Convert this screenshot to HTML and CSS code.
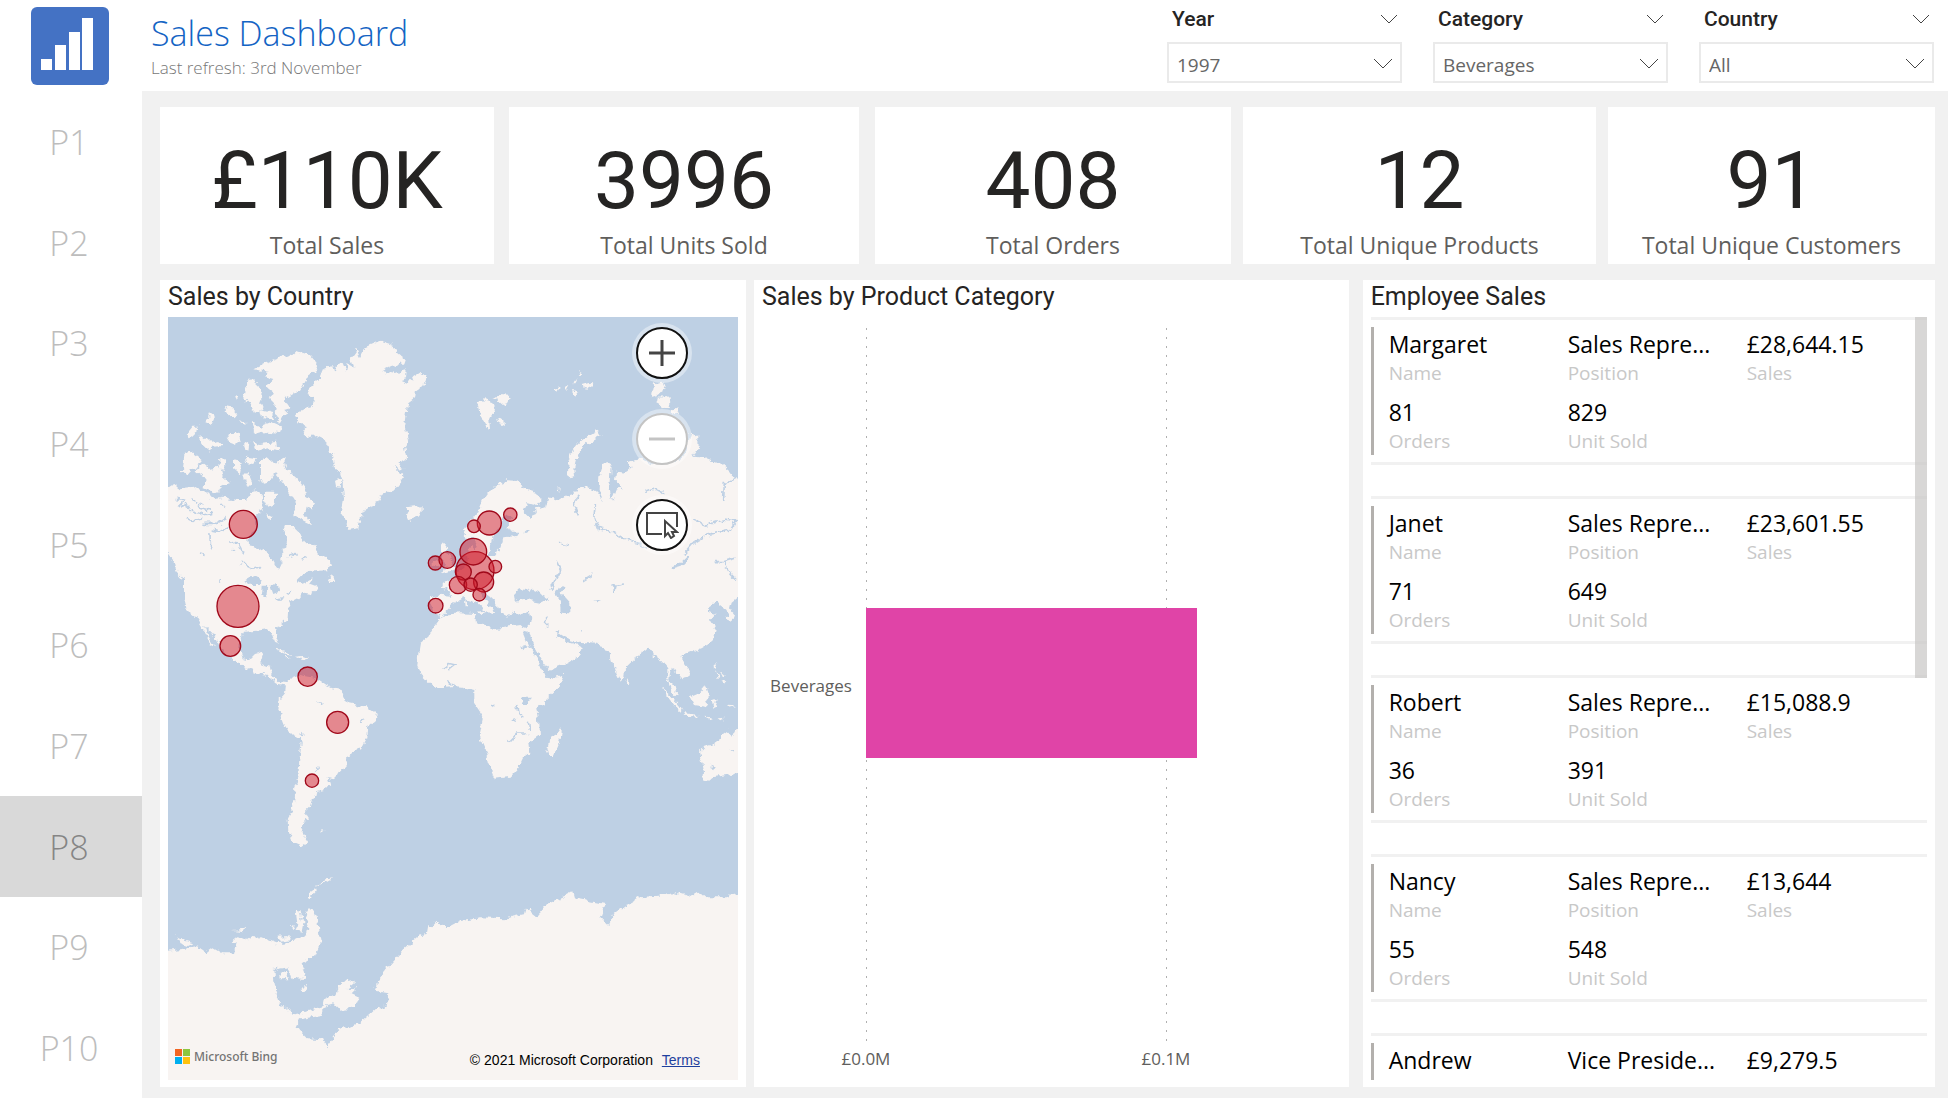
FILE: index.html
```
<!DOCTYPE html>
<html lang="en">
<head>
  <meta charset="UTF-8">
  <meta name="viewport" content="width=device-width, initial-scale=1.0">
  <title>Sales Dashboard</title>
  <link rel="stylesheet" href="styles.css">
</head>
<body>
  <div class="side">
    <div class="logo">
      <svg viewBox="0 0 78 78" width="78" height="78">
        <rect width="78" height="78" rx="6" fill="#4472c4"/>
        <path fill="#fff" d="M10 52h11v11H10zM24 38h11v25H24zM38 25h11v38H38zM51 11h11v52H51z"/>
      </svg>
    </div>
    <nav class="pages">
      <a href="#p1">P1</a>
      <a href="#p2">P2</a>
      <a href="#p3">P3</a>
      <a href="#p4">P4</a>
      <a href="#p5">P5</a>
      <a href="#p6">P6</a>
      <a href="#p7">P7</a>
      <a href="#p8" class="active">P8</a>
      <a href="#p9">P9</a>
      <a href="#p10">P10</a>
    </nav>
  </div>

  <div class="main">
    <header class="header">
      <div class="heading">
        <h1>Sales Dashboard</h1>
        <p>Last refresh: 3rd November</p>
      </div>
      <div class="filters">
        <div class="filter">
          <div class="filter-title">
            <label for="year">Year</label>
            <svg width="18" height="10" viewBox="0 0 18 10"><path d="M1 1l8 8 8-8"/></svg>
          </div>
          <div class="select-box">
            <select id="year"><option>1997</option></select>
            <svg width="20" height="11" viewBox="0 0 20 11"><path d="M1 1l9 9 9-9"/></svg>
          </div>
        </div>
        <div class="filter">
          <div class="filter-title">
            <label for="category">Category</label>
            <svg width="18" height="10" viewBox="0 0 18 10"><path d="M1 1l8 8 8-8"/></svg>
          </div>
          <div class="select-box">
            <select id="category"><option>Beverages</option></select>
            <svg width="20" height="11" viewBox="0 0 20 11"><path d="M1 1l9 9 9-9"/></svg>
          </div>
        </div>
        <div class="filter">
          <div class="filter-title">
            <label for="country">Country</label>
            <svg width="18" height="10" viewBox="0 0 18 10"><path d="M1 1l8 8 8-8"/></svg>
          </div>
          <div class="select-box">
            <select id="country"><option>All</option></select>
            <svg width="20" height="11" viewBox="0 0 20 11"><path d="M1 1l9 9 9-9"/></svg>
          </div>
        </div>
      </div>
    </header>

    <div class="board">
      <div class="kpis">
        <div class="kpi sales"><strong>£110K</strong><span>Total Sales</span></div>
        <div class="kpi units"><strong>3996</strong><span>Total Units Sold</span></div>
        <div class="kpi orders"><strong>408</strong><span>Total Orders</span></div>
        <div class="kpi products"><strong>12</strong><span>Total Unique Products</span></div>
        <div class="kpi customers"><strong>91</strong><span>Total Unique Customers</span></div>
      </div>

      <div class="panels">
        <section class="panel map-panel">
          <h2>Sales by Country</h2>
          <div class="map">
            <svg class="world" viewBox="0 0 1710 2289" preserveAspectRatio="xMidYMid slice">
              <defs>
                <!-- rough coastlines -->
                <filter id="coast" x="0" y="0" width="100%" height="100%">
                  <feTurbulence type="fractalNoise" baseFrequency="0.05" numOctaves="3" seed="4"/>
                  <feDisplacementMap in="SourceGraphic" scale="22" xChannelSelector="R" yChannelSelector="G"/>
                </filter>
              </defs>
              <g filter="url(#coast)">
              <rect x="-60" y="-60" width="1830" height="2410" class="sea"/>
              <!-- Americas and Greenland -->
              <g transform="translate(-24 -141)">
                <path class="land" d="M-20 650L24 650 40 640 60 655 100 650 125 665 160 685 190 680 230 690 262 690 272 665 290 660 308 675 312 700 300 725 285 740 290 775 268 795 262 815 290 832 330 855 346 885 358 897 368 875 362 850 378 830 382 810 368 785 375 768 400 768 422 790 432 820 455 818 468 835 480 855 502 865 512 880 505 900 480 902 450 905 425 915 408 932 428 938 455 925 448 945 475 955 455 970 430 965 415 985 395 995 385 1015 383 1045 360 1065 345 1075 350 1100 357 1118 345 1112 335 1085 320 1078 290 1082 255 1085 240 1100 238 1135 248 1165 270 1170 285 1155 310 1148 300 1180 330 1190 333 1212 352 1235 385 1240 380 1248 345 1238 320 1215 295 1210 265 1198 240 1182 212 1165 180 1130 160 1092 132 1065 140 1085 168 1132 155 1125 128 1075 110 1045 80 1022 72 980 72 930 50 905 45 880 24 850 -20 840z"/>
                <path class="land" d="M385 1235L400 1220 415 1215 470 1225 500 1245 520 1255 545 1260 555 1290 570 1300 620 1310 650 1328 648 1350 625 1370 622 1405 605 1438 585 1442 562 1460 558 1485 540 1505 525 1525 500 1522 508 1545 495 1560 472 1565 470 1580 455 1585 450 1610 435 1625 447 1645 430 1665 425 1685 445 1717 430 1728 400 1715 385 1680 383 1650 395 1630 405 1580 402 1555 415 1520 418 1470 425 1420 420 1405 390 1390 370 1360 355 1320 358 1290 375 1270 378 1245z"/>
                <path class="land" d="M408 440L425 420 455 410 460 380 443 372 450 350 480 322 490 298 520 282 526 310 534 285 545 275 558 305 562 280 580 290 572 265 590 240 600 262 615 232 630 225 660 212 700 225 715 250 735 265 730 280 700 288 668 303 705 312 740 298 738 325 722 330 745 340 760 318 780 305 800 320 790 345 768 360 765 385 745 400 740 430 735 470 748 510 735 530 742 560 715 575 730 600 700 590 735 622 710 655 665 675 650 700 620 712 605 735 595 775 565 780 555 745 545 730 552 690 548 640 540 605 525 590 518 550 500 525 490 505 470 495 440 505 425 490 437 472 420 455z"/>
                <path class="land" d="M280 298L320 278 350 268 370 250 390 262 410 243 450 255 475 285 466 305 440 325 420 360 400 372 378 385 368 380 388 410 370 435 358 458 346 440 350 410 325 385 345 368 322 350 340 330 312 322 325 306z"/>
                <path class="land" d="M258 345L270 325 292 345 310 370 300 395 308 415 285 432 270 400 248 380zM66 605L70 552 92 545 122 567 112 590 95 598 80 615zM112 595L130 578 152 597 180 588 188 618 213 640 190 645 178 668 150 660 128 650 135 625 105 605zM300 630L300 570 320 562 340 580 372 565 382 600 410 625 432 652 435 680 465 700 455 715 440 710 435 732 452 765 420 750 400 735 410 700 385 660 365 635 345 612 330 632 310 638z"/>
                <path class="land" d="M278 510L300 522 352 515 355 540 320 535 290 543zM80 495L100 470 120 470 112 485 88 503zM140 455L150 430 165 440 155 463zM112 500L130 498 150 515 175 510 188 528 155 530 150 542 130 525zM190 408L215 412 232 430 225 448 205 435zM240 450L262 460 255 468zM198 490L235 488 242 510 220 525zM250 512L268 518 265 542 250 532zM275 455L300 470 335 455 368 470 360 490 320 485 285 495zM225 375L235 385 230 392zM222 565L245 580 240 610 222 595zM258 560L288 565 280 582 262 580zM250 612L265 610 278 640 268 650 255 640zM180 568L195 565 196 595 184 600zM315 665L345 665 345 700 325 710 315 690zM312 730L335 740 330 752zM525 632L545 630 542 650 528 648zM300 420L340 430 335 445 305 440z"/>
                <path class="land" d="M732 740L745 722 738 712 770 708 786 722 778 738 750 748zM840 828L850 815 862 830 855 845 870 862 880 885 892 896 850 910 858 884 848 862zM815 872L838 860 842 888 815 895zM502 925L520 918 524 932 508 934zM342 1135L375 1142 400 1155 370 1150zM408 1160L428 1158 448 1165 430 1170zM375 1160L390 1162 380 1165zM480 1682L494 1680 484 1687z"/>
                <path class="inlet" d="M50 685L75 690 60 705 90 715M75 700L100 725 130 735 160 730M95 690L125 700 118 712 150 720M80 745L105 752 130 745M155 780L180 785 205 770M150 790L152 840M180 700L195 715M120 852l14 4M175 935l12-8M208 820L235 815M245 880L275 895 300 890M215 835l10 10M130 760L175 760 200 745M225 810L240 830 250 850M385 860L410 850M425 870L440 865"/>
                <path class="lake" d="M250 932L278 915 305 930 300 945 270 945zM308 950L322 950 318 988 306 975zM328 940L352 945 358 965 340 972zM345 985L375 980 360 990zM380 965L400 962 388 972zM470 1296l26 2-10 6zM600 1352l14-4-8 10zM420 1385l14 8-4 6zM464 1497l12-2-6 8z"/>
              </g>
              <!-- Europe, Asia and Africa -->
              <g transform="translate(816 -51)">
                <path class="land" d="M70 700L80 680 110 640 125 605 150 570 175 555 200 538 235 540 245 562 288 575 305 600 292 618 262 610 250 632 268 650 288 642 285 628 318 622 325 592 350 598 380 588 400 582 412 568 440 558 468 575 492 605 476 570 478 530 490 492 506 486 512 502 508 560 516 600 525 575 548 562 525 545 528 512 560 515 575 502 563 484 600 475 630 490 720 485 735 455 750 395 775 412 776 445 760 470 800 475 840 490 870 515 885 535 950 545 950 880 894 890 875 905 870 925 885 945 880 960 865 958 860 930 840 915 830 905 808 920 806 936 822 942 812 955 828 982 822 1008 810 1030 785 1045 745 1060 725 1068 728 1085 750 1110 745 1130 725 1135 712 1115 692 1100 688 1140 705 1165 712 1190 695 1172 682 1135 682 1105 660 1078 642 1070 638 1050 625 1040 610 1055 585 1070 578 1085 558 1105 556 1135 543 1146 530 1120 515 1080 510 1055 490 1050 475 1028 410 1025 390 1020 370 1008 350 995 345 1000 372 1025 400 1030 425 1045 415 1070 385 1090 325 1112 310 1108 318 1133 330 1135 370 1128 350 1170 292 1225 298 1265 300 1305 265 1328 268 1358 250 1372 235 1405 212 1430 162 1436 145 1392 135 1350 118 1310 130 1250 103 1210 103 1170 65 1160 40 1158 -15 1165 -30 1150 -55 1125 -68 1100 -65 1060 -60 1030 -35 1010 -20 980 5 945 -28 935 -30 895 0 887 32 890 22 868 -2 860 22 845 45 832 65 805 85 785 80 760 95 738 105 750 112 730 98 715 80 720z"/>
                <path class="lake" d="M8 944L30 922 45 905 70 892 85 900 112 908 130 928 150 948 163 928 140 905 122 882 135 880 158 898 176 918 188 942 205 950 218 932 240 944 270 935 275 960 262 985 235 975 200 980 172 990 140 980 108 965 105 942 60 940zM222 885L240 868 262 870 268 860 280 872 310 885 328 895 300 908 255 900 225 905zM345 880L358 858 380 862 365 880 388 905 388 940 362 938 360 905zM250 995L262 998 280 1035 305 1080 325 1108 318 1125 300 1095 270 1045zM145 768L155 735 162 705 182 680 188 650 205 640 215 655 202 680 210 695 240 695 232 708 190 712 182 745 165 768z"/>
                <path class="land" d="M72 900l8 2 2 18-8-4zM112 935l22-3-8 14z"/>
                <path class="inlet" d="M466 612L462 650 475 685 520 695 560 722 600 730 625 745M415 590L400 610 412 640M760 660L800 675 850 660 885 665 870 690 800 705 760 730 730 765M850 548L848 600M885 535L852 552M820 785L850 785 870 820 890 840M850 785L885 775M350 785L362 810 340 850 330 875M255 700L270 690M610 575L640 565 670 580M320 945L320 980M360 730L390 735M430 840L455 825M520 860L555 855M245 1045L262 1040M5 1105L25 1090 45 1095 25 1110M20 1145L45 1155M230 1215L235 1240 250 1252M265 1265L268 1290M208 1325L230 1302 262 1302"/>
                <path class="lake" d="M245 1190L275 1190 265 1212 248 1212zM155 1210l8 2v10l-6-4zM460 905l30-4-18 9zM518 855l10 2-4 20-8-6zM425 990l6-2v8zM220 1258l12-4-6 10zM695 800L720 790 745 765 750 772 725 800 700 808z"/>
                <path class="zemlya" d="M396 530Q385 470 430 430Q450 412 478 398"/>
                <path class="land" d="M110 300L130 305 140 295 155 300 165 330 148 355 150 390 138 375 120 345zM162 295L178 285 212 288 205 305 185 312 172 300zM175 350L190 360 192 375 178 368zM400 240L415 232 410 250 398 250zM425 255L460 245 440 272 428 270zM398 270L418 275 408 288zM340 268L360 262 352 275zM370 262L388 258 380 272zM415 215L424 220 418 226zM640 250L668 245 678 270 655 285 632 292zM650 290L685 288 690 320 665 325zM695 330L712 322 720 345 702 345zM355 565l8 4-6 6z"/>
                <path class="land" d="M360 1285L365 1290 362 1320 342 1368 328 1368 322 1345 330 1310 350 1300zM562 1135l10 14-8 8-4-10zM665 1163L690 1185 725 1228 722 1235 700 1215 680 1190zM732 1240L775 1245 772 1250 735 1247zM692 1160l22 20-2 8-16-14zM750 1192L778 1180 800 1156 806 1190 798 1220 762 1215zM818 1200l18-6-10 12 8 14-10 4zM848 1140l14 6-8 10zM826 1080l8 20-6 8zM825 1110l16 20-8 4zM842 1112l12 10-4 6zM800 1250l20 4-16 4zM836 1255l20-2-12 8zM862 1217l24 2-22 4z"/>
                <path class="land" d="M780 1355L792 1342 830 1328 845 1305 862 1292 880 1310 892 1285 950 1270 950 1410 894 1415 860 1425 818 1432 805 1442 790 1438 792 1410z"/>
                <path class="lake" d="M872 1347l10 2-6 6zM816 1395l6 2-2 14-6-4z"/>
              </g>
              <!-- Antarctica -->
              <g transform="translate(-24 1029)">
                <path class="land" d="M-20 876L24 872 110 862 145 875 160 865 185 880 222 880 230 850 215 845 232 832 260 838 275 828 300 830 350 850 400 845 440 825 445 800 433 770 450 740 470 770 475 810 482 850 465 885 425 910 436 935 425 960 395 955 385 922 340 930 345 980 360 1030 385 1050 405 1060 450 1052 490 1040 495 1018 530 1003 535 980 565 955 585 970 562 988 590 985 575 1000 598 1010 585 1045 540 1052 520 1030 500 1035 480 1068 420 1078 410 1100 440 1135 490 1138 499 1162 545 1102 600 1090 655 1040 680 1045 685 1000 645 992 650 965 700 905 730 870 775 830 800 825 805 795 815 802 830 785 845 798 870 798 905 780 960 772 1035 775 1095 762 1100 745 1130 770 1160 735 1215 710 1240 697 1245 715 1335 732 1320 770 1345 795 1360 765 1400 735 1440 712 1515 705 1545 697 1590 710 1615 695 1635 712 1700 712 1720 705 1790 690 1790 1400 -20 1400z"/>
                <path class="land" d="M358 942L378 935 385 958 360 958zM420 995L440 972 448 978 428 998zM445 720L450 695 468 682 470 695 455 712zM470 678L500 655 520 652 485 672zM410 752L422 755 430 790 425 815 405 810 415 790zM388 795L405 798 400 808zM352 830L385 828 390 838 362 842zM52 832L75 842 100 850 85 858 62 850zM218 810L252 806 250 814z"/>
              </g>
              </g>
              <!-- sales by country -->
              <g class="bubbles">
                <circle cx="226" cy="622" r="42"/>
                <circle cx="210" cy="868" r="63"/>
                <circle cx="187" cy="987" r="31"/>
                <circle cx="419" cy="1079" r="29"/>
                <circle cx="509" cy="1216" r="33"/>
                <circle cx="432" cy="1391" r="20"/>
                <circle cx="802" cy="738" r="21"/>
                <circle cx="838" cy="729" r="25"/>
                <circle cx="803" cy="866" r="22"/>
                <circle cx="921" cy="761" r="57"/>
                <circle cx="916" cy="704" r="40"/>
                <circle cx="964" cy="618" r="36"/>
                <circle cx="918" cy="628" r="19"/>
                <circle cx="1027" cy="593" r="20"/>
                <circle cx="982" cy="749" r="19"/>
                <circle cx="886" cy="765" r="24"/>
                <circle cx="870" cy="804" r="26"/>
                <circle cx="947" cy="795" r="30"/>
                <circle cx="908" cy="803" r="20"/>
                <circle cx="934" cy="833" r="19"/>
              </g>
            </svg>
            <div class="map-tools">
              <button aria-label="Zoom in"><svg width="26" height="26" viewBox="0 0 26 26"><path d="M13 0v26M0 13h26" stroke-width="3"/></svg></button>
              <button aria-label="Zoom out" disabled><svg width="26" height="26" viewBox="0 0 26 26"><path d="M0 13h26" stroke-width="3"/></svg></button>
              <button aria-label="Select area"><svg width="34" height="28" viewBox="0 0 34 28"><path d="M17 23H2V2h30v14" stroke-width="2"/><path d="M20 10v15l3-3 3 5 3-2-2-4h5z" stroke-width="2"/></svg></button>
            </div>
            <div class="map-footer">
              <div class="bing">
                <svg width="15" height="15" viewBox="0 0 15 15"><path fill="#f26522" d="M0 0h7v7H0z"/><path fill="#8dc63f" d="M8 0h7v7H8z"/><path fill="#00aeef" d="M0 8h7v7H0z"/><path fill="#ffc20e" d="M8 8h7v7H8z"/></svg>
                <span>Microsoft Bing</span>
              </div>
              <div class="terms">© 2021 Microsoft Corporation <a href="#terms">Terms</a></div>
            </div>
          </div>
        </section>

        <section class="panel chart-panel">
          <h2>Sales by Product Category</h2>
          <div class="chart">
            <div class="category">Beverages</div>
            <div class="plot">
              <div class="gridline" style="left: 0%"></div>
              <div class="gridline" style="left: 63.2%"></div>
              <div class="bar" style="width: 69.7%"></div>
            </div>
            <div class="axis">
              <span style="left: 0%">£0.0M</span>
              <span style="left: 63.2%">£0.1M</span>
            </div>
          </div>
        </section>

        <section class="panel employee-panel">
          <h2>Employee Sales</h2>
          <div class="employees">
            <div class="employee">
              <dl>
                <div><dd>Margaret</dd><dt>Name</dt></div>
                <div><dd>Sales Repre...</dd><dt>Position</dt></div>
                <div><dd>£28,644.15</dd><dt>Sales</dt></div>
                <div><dd>81</dd><dt>Orders</dt></div>
                <div><dd>829</dd><dt>Unit Sold</dt></div>
              </dl>
            </div>
            <div class="employee">
              <dl>
                <div><dd>Janet</dd><dt>Name</dt></div>
                <div><dd>Sales Repre...</dd><dt>Position</dt></div>
                <div><dd>£23,601.55</dd><dt>Sales</dt></div>
                <div><dd>71</dd><dt>Orders</dt></div>
                <div><dd>649</dd><dt>Unit Sold</dt></div>
              </dl>
            </div>
            <div class="employee">
              <dl>
                <div><dd>Robert</dd><dt>Name</dt></div>
                <div><dd>Sales Repre...</dd><dt>Position</dt></div>
                <div><dd>£15,088.9</dd><dt>Sales</dt></div>
                <div><dd>36</dd><dt>Orders</dt></div>
                <div><dd>391</dd><dt>Unit Sold</dt></div>
              </dl>
            </div>
            <div class="employee">
              <dl>
                <div><dd>Nancy</dd><dt>Name</dt></div>
                <div><dd>Sales Repre...</dd><dt>Position</dt></div>
                <div><dd>£13,644</dd><dt>Sales</dt></div>
                <div><dd>55</dd><dt>Orders</dt></div>
                <div><dd>548</dd><dt>Unit Sold</dt></div>
              </dl>
            </div>
            <div class="employee">
              <dl>
                <div><dd>Andrew</dd></div>
                <div><dd>Vice Preside...</dd></div>
                <div><dd>£9,279.5</dd></div>
              </dl>
            </div>
            <div class="scrollbar"></div>
          </div>
        </section>
      </div>
    </div>
  </div>
</body>
</html>
```
FILE: styles.css
```
* {
  box-sizing: border-box;
}
body {
  margin: 0;
  display: flex;
  height: 100vh;
  min-height: 700px;
  background: white;
  font-family: "Open Sans", "Noto Sans", sans-serif;
  color: #252423;
}
.side {
  width: 142px;
  flex: none;
  display: flex;
  flex-direction: column;
}
.logo {
  height: 91px;
  padding: 7px 0 0 31px;
}
.pages {
  flex: 1;
  display: flex;
  flex-direction: column;
}
.pages a {
  flex: 1;
  display: flex;
  align-items: center;
  justify-content: center;
  padding: 1px 4px 0 0;
  font-size: 34px;
  font-weight: 300;
  color: #bdbdbd;
  text-decoration: none;
}
.pages .active {
  background: #d9d9d9;
  color: #858585;
}
.main {
  flex: 1;
  min-width: 0;
  display: flex;
  flex-direction: column;
}
.header {
  height: 91px;
  flex: none;
  display: flex;
  justify-content: space-between;
  padding: 0 14px 0 9px;
}
.heading {
  padding-top: 10px;
}
h1 {
  margin: 0;
  font-size: 34px;
  line-height: 46px;
  font-weight: 300;
  color: #1464c4;
}
.heading p {
  margin: 0;
  font-size: 17px;
  line-height: 24px;
  font-weight: 300;
  color: #777;
}
.filters {
  display: flex;
  gap: 31px;
}
.filter {
  width: 235px;
}
.filter-title {
  display: flex;
  align-items: center;
  justify-content: space-between;
  height: 42px;
  padding: 0 4px 4px 5px;
  font-family: Roboto, sans-serif;
  font-size: 21px;
  font-weight: 500;
}
.filter svg {
  fill: none;
  stroke: #444;
  margin: 0 0 0 auto;
}
.select-box {
  position: relative;
}
.select-box select {
  appearance: none;
  width: 100%;
  height: 41px;
  padding: 4px 34px 0 8px;
  border: 2px solid #eaeaea;
  border-radius: 0;
  background: white;
  font-family: "Open Sans", "Noto Sans", sans-serif;
  font-size: 19px;
  color: #666;
}
.select-box svg {
  position: absolute;
  right: 9px;
  top: 16px;
  pointer-events: none;
}
.board {
  flex: 1;
  min-height: 0;
  display: flex;
  flex-direction: column;
  gap: 16px;
  padding: 16px 13px 11px 18px;
  background: #f1f1f1;
}
.kpis {
  display: flex;
  gap: 12px;
}
.kpi {
  height: 157px;
  padding-top: 26px;
  background: white;
  text-align: center;
}
.kpi strong {
  display: block;
  font-family: Roboto, sans-serif;
  font-size: 80px;
  line-height: 96px;
  font-weight: 400;
}
.kpi span {
  display: block;
  font-size: 23px;
  line-height: 32px;
  color: #605e5c;
}
.sales {
  flex: 334;
}
.units {
  flex: 350;
  margin-left: 3px;
}
.orders {
  flex: 356;
  margin-left: 4px;
}
.products {
  flex: 353;
}
.customers {
  flex: 327;
}
.panels {
  flex: 1;
  min-height: 0;
  display: flex;
}
.panel {
  display: flex;
  flex-direction: column;
  min-width: 0;
  padding: 0 8px 7px;
  background: white;
}
.panel h2 {
  margin: 0;
  height: 37px;
  font-family: Roboto, sans-serif;
  font-size: 25px;
  line-height: 34px;
  font-weight: 400;
}
.map-panel {
  flex: 586;
  margin-right: 8px;
}
.chart-panel {
  flex: 595;
  margin-right: 14px;
}
.employee-panel {
  flex: 572;
}
.map {
  position: relative;
  flex: 1;
  min-height: 0;
  overflow: hidden;
  background: #bed0e4;
}
.world {
  position: absolute;
  width: 100%;
  height: 100%;
}
.sea {
  fill: #bed0e4;
}
.land {
  fill: #f8f4f2;
}
.lake {
  fill: #bed0e4;
}
.inlet {
  fill: none;
  stroke: #bed0e4;
  stroke-width: 5;
}
.zemlya {
  fill: none;
  stroke: #f8f4f2;
  stroke-width: 19;
}
.bubbles {
  fill: rgba(208, 28, 44, 0.5);
  stroke: #a0081a;
  stroke-width: 4;
}
.map-tools {
  position: absolute;
  top: 10px;
  right: 50px;
  display: flex;
  flex-direction: column;
  gap: 34px;
}
.map-tools button {
  display: flex;
  align-items: center;
  justify-content: center;
  width: 52px;
  height: 52px;
  padding: 0;
  border: 2px solid #111;
  border-radius: 50%;
  background: white;
  box-shadow: 0 0 0 4px rgba(255, 255, 255, 0.4);
}
.map-tools svg {
  fill: none;
  stroke: #444;
}
.map-tools button:disabled {
  border-color: #c4c4c4;
}
.map-tools button:disabled svg {
  stroke: #c4c4c4;
}
.map-footer {
  position: absolute;
  left: 7px;
  right: 38px;
  bottom: 10px;
  display: flex;
  justify-content: space-between;
}
.bing {
  display: flex;
  align-items: center;
  gap: 4px;
  height: 22px;
  font-family: "Noto Sans", sans-serif;
  font-size: 12px;
  font-weight: 500;
  color: #737373;
}
.terms {
  padding-top: 5px;
  font-family: "Liberation Sans", Arial, sans-serif;
  font-size: 14px;
  line-height: 20px;
  color: black;
}
.terms a {
  margin-left: 5px;
  color: #1f3f9e;
}
.chart {
  flex: 1;
  display: grid;
  grid-template-columns: 90px 1fr;
  grid-template-rows: 1fr 37px;
  column-gap: 14px;
  padding-top: 11px;
}
.category {
  align-self: center;
  text-align: right;
  font-size: 17px;
  color: #605e5c;
}
.plot {
  position: relative;
  display: flex;
  align-items: center;
  padding-bottom: 6px;
}
.gridline {
  position: absolute;
  top: 0;
  bottom: 0;
  width: 1px;
  background: repeating-linear-gradient(#b0b0b0 0 2px, transparent 2px 9px);
}
.bar {
  position: relative;
  height: 150px;
  background: #e044a7;
}
.axis {
  position: relative;
  grid-column: 2;
}
.axis span {
  position: absolute;
  top: 4px;
  transform: translateX(-50%);
  font-size: 17px;
  line-height: 24px;
  color: #605e5c;
}
.employees {
  position: relative;
  flex: 1;
  min-height: 0;
  overflow: hidden;
}
.employee {
  height: 148px;
  margin-bottom: 31px;
  padding: 7px 0;
  border-top: 3px solid #f1f1f1;
  border-bottom: 3px solid #f1f1f1;
}
.employee dl {
  display: grid;
  grid-template-columns: repeat(3, 179px);
  grid-auto-rows: 68px;
  height: 128px;
  margin: 0;
  padding-left: 15px;
  border-left: 3px solid #b3b0ad;
}
.employee dd {
  margin: 0;
  font-size: 23px;
  line-height: 34px;
  color: black;
  white-space: nowrap;
}
.employee dt {
  font-size: 19px;
  line-height: 25px;
  color: #c8c8c8;
}
.scrollbar {
  position: absolute;
  top: 0;
  right: 0;
  width: 12px;
  height: 361px;
  background: rgba(200, 198, 196, 0.7);
}
```
